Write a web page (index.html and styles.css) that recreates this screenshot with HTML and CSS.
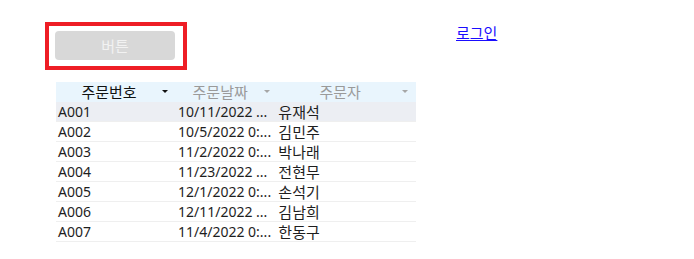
FILE: index.html
```html
<!DOCTYPE html>
<html lang="ko">
<head>
    <meta charset="UTF-8">
    <title>주문</title>
    <link rel="stylesheet" href="styles.css">
</head>
<body>
    <div class="top">
        <div class="frame"><button class="btn" disabled>버튼</button></div>
        <a class="login" href="#">로그인</a>
    </div>
    <div class="grid">
        <div class="row head">
            <div class="cell c1 active">주문번호<span class="arrow"></span></div>
            <div class="cell c2">주문날짜<span class="arrow"></span></div>
            <div class="cell c3">주문자<span class="arrow"></span></div>
        </div>
        <div class="row sel"><div class="cell c1">A001</div><div class="cell c2">10/11/2022 ...</div><div class="cell c3">유재석</div></div>
        <div class="row"><div class="cell c1">A002</div><div class="cell c2">10/5/2022 0:...</div><div class="cell c3">김민주</div></div>
        <div class="row"><div class="cell c1">A003</div><div class="cell c2">11/2/2022 0:...</div><div class="cell c3">박나래</div></div>
        <div class="row"><div class="cell c1">A004</div><div class="cell c2">11/23/2022 ...</div><div class="cell c3">전현무</div></div>
        <div class="row"><div class="cell c1">A005</div><div class="cell c2">12/1/2022 0:...</div><div class="cell c3">손석기</div></div>
        <div class="row"><div class="cell c1">A006</div><div class="cell c2">12/11/2022 ...</div><div class="cell c3">김남희</div></div>
        <div class="row"><div class="cell c1">A007</div><div class="cell c2">11/4/2022 0:...</div><div class="cell c3">한동구</div></div>
    </div>
</body>
</html>
```

FILE: styles.css
```css
body {
    margin: 0;
    background-color: white;
    font-family: "Noto Sans", "Noto Sans CJK KR", sans-serif;
    font-size: 14px;
    color: #1e1e1e;
}
.top {
    display: flex;
    align-items: flex-start;
    padding: 22px 0 0 45px;
}
.frame {
    border: 4px solid #ee1d25;
    padding: 5px 8px 6px 6px;
}
.btn {
    display: block;
    width: 120px;
    height: 29px;
    border: none;
    border-radius: 4px;
    background-color: #d8d8d8;
    color: #f2f2f2;
    font-family: "Noto Sans CJK KR", sans-serif;
    font-size: 15px;
    padding: 0;
}
.login {
    margin: 3px 0 0 269px;
    color: #1a0dff;
    font-family: "Noto Sans CJK KR", sans-serif;
    font-size: 15px;
    line-height: 16px;
}
.grid {
    width: 360px;
    margin: 12px 0 0 56px;
}
.row {
    display: flex;
    height: 20px;
    border-bottom: 1px solid #efefef;
    box-sizing: border-box;
}
.cell {
    line-height: 19px;
    white-space: nowrap;
    overflow: hidden;
    padding-left: 2px;
}
.c1 { width: 120px; }
.c2 { width: 100px; }
.c3 {
    width: 140px;
    font-family: "Noto Sans CJK KR", sans-serif;
    font-size: 15px;
}
.head {
    background-color: #e9f5fd;
    border-bottom: none;
    color: #9a9a9a;
}
.head .cell {
    position: relative;
    text-align: center;
    font-family: "Noto Sans CJK KR", sans-serif;
    font-size: 15px;
    padding: 0 14px 0 0;
}
.head .active {
    color: #111;
}
.arrow {
    position: absolute;
    right: 8px;
    top: 8px;
    border-left: 3px solid transparent;
    border-right: 3px solid transparent;
    border-top: 3px solid #a6a6a6;
}
.active .arrow {
    border-top-color: #111;
}
.sel {
    background-color: #eceef3;
}
```
